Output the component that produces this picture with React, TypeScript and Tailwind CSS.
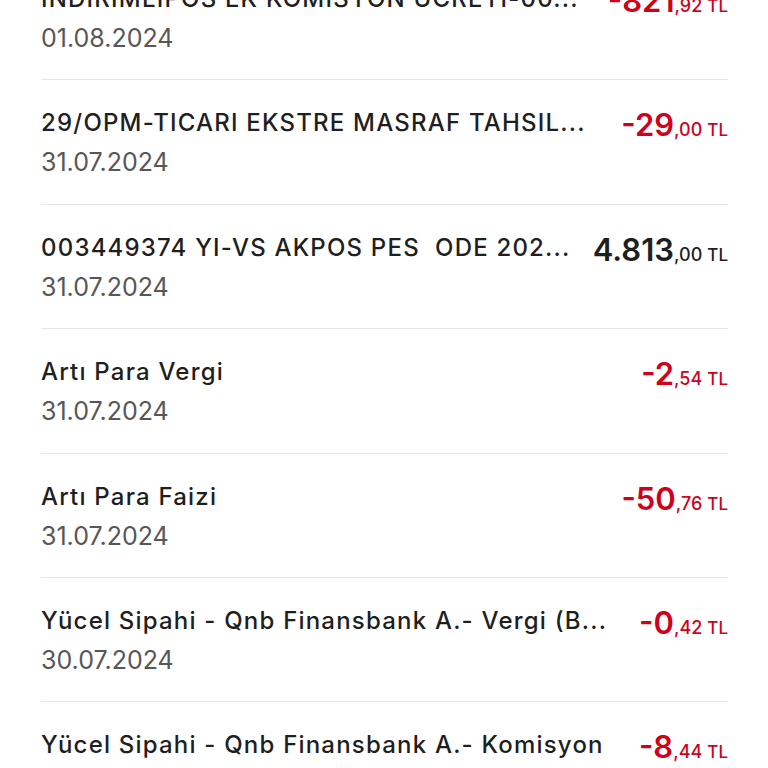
import React from "react";

type Tx = {
  title: string;
  date: string;
  whole: string;
  cents: string;
  negative: boolean;
};

const rows: Tx[] = [
  { title: "INDIRIMLIPOS EK KOMISYON ÜCRETI-00...", date: "01.08.2024", whole: "-821", cents: "92", negative: true },
  { title: "29/OPM-TICARI EKSTRE MASRAF TAHSIL...", date: "31.07.2024", whole: "-29", cents: "00", negative: true },
  { title: "003449374 YI-VS AKPOS PES  ODE 202...", date: "31.07.2024", whole: "4.813", cents: "00", negative: false },
  { title: "Artı Para Vergi", date: "31.07.2024", whole: "-2", cents: "54", negative: true },
  { title: "Artı Para Faizi", date: "31.07.2024", whole: "-50", cents: "76", negative: true },
  { title: "Yücel Sipahi - Qnb Finansbank A.- Vergi (B...", date: "30.07.2024", whole: "-0", cents: "42", negative: true },
  { title: "Yücel Sipahi - Qnb Finansbank A.- Komisyon", date: "30.07.2024", whole: "-8", cents: "44", negative: true },
];

const Amount = ({ tx }: { tx: Tx }) => (
  <div
    className={`flex items-baseline whitespace-nowrap ${
      tx.negative ? "text-[#d0021b]" : "text-[#1f1f1f]"
    }`}
  >
    <span className="text-[31px] font-semibold leading-none">{tx.whole}</span>
    <span className="text-[18px] font-medium leading-none">,{tx.cents}</span>
    <span className="text-[17px] font-medium leading-none ml-[5px]">TL</span>
  </div>
);

const App = () => {
  return (
    <div
      className="w-[768px] h-[768px] overflow-hidden bg-white"
      style={{ fontFamily: "Inter, 'Noto Sans', sans-serif" }}
    >
      <div className="-mt-[44px] pl-[41px] pr-[40px]">
        {rows.map((tx, i) => (
          <div
            key={i}
            className="h-[124.4px] flex items-start justify-between gap-5 border-b border-[#e6e6e6] pt-[27px]"
          >
            <div className="flex flex-col min-w-0">
              <p className="text-[24px] leading-[31px] font-medium text-[#1f1f1f] tracking-[1.2px] whitespace-pre overflow-hidden text-ellipsis">
                {tx.title}
              </p>
              <p className="mt-[9px] text-[25px] leading-[31px] text-[#575757]">
                {tx.date}
              </p>
            </div>
            <div className="pt-[2px] shrink-0">
              <Amount tx={tx} />
            </div>
          </div>
        ))}
      </div>
    </div>
  );
};

export default App;
